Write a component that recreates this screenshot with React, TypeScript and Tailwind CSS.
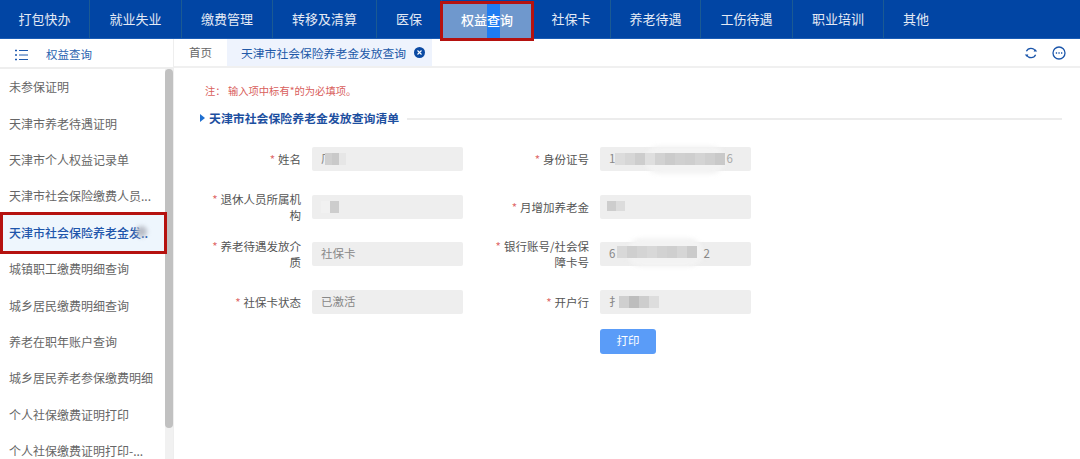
import React from "react";

const nav = [
  { t: "打包快办", w: "w-[90px]" },
  { t: "就业失业", w: "w-[92px]" },
  { t: "缴费管理", w: "w-[91px]" },
  { t: "转移及清算", w: "w-[104px]" },
  { t: "医保", w: "w-[65px]" },
];
const navRight = [
  { t: "社保卡", w: "w-[79px]" },
  { t: "养老待遇", w: "w-[90px]" },
  { t: "工伤待遇", w: "w-[92px]" },
  { t: "职业培训", w: "w-[91px]" },
  { t: "其他", w: "w-[64px]" },
];
const side = [
  "未参保证明",
  "天津市养老待遇证明",
  "天津市个人权益记录单",
  "天津市社会保险缴费人员...",
  "SEL",
  "城镇职工缴费明细查询",
  "城乡居民缴费明细查询",
  "养老在职年账户查询",
  "城乡居民养老参保缴费明细",
  "个人社保缴费证明打印",
  "个人社保缴费证明打印-...",
];

function Mosaic({ shades, cell = 10, h = 20, halo }: { shades: string[]; cell?: number; h?: number; halo?: string }) {
  return (
    <span className="relative inline-flex items-center">
      {halo ? <span className={"absolute rounded-full bg-[#f3f3f3] blur-[2px] " + halo} /> : null}
      <span className="relative flex blur-[0.5px]">
        {shades.map((c, i) => (
          <span key={i} style={{ width: cell, height: h, background: c }} />
        ))}
      </span>
    </span>
  );
}

function Field({ label, children }: { label: React.ReactNode; children: React.ReactNode }) {
  return (
    <div className="flex h-[24px] items-center">
      <div className="w-[101px] shrink-0 whitespace-nowrap text-right text-[11.5px] leading-[16px] text-[#555]">{label}</div>
      <div className="ml-[11px] flex h-[24px] w-[151px] items-center overflow-visible rounded-[2px] bg-[#eeeeee] pl-[9px] text-[11.5px] text-[#888]">
        {children}
      </div>
    </div>
  );
}

const Star = () => <span className="mr-[3px] text-[#e06a6a]">*</span>;

export default function App() {
  return (
    <div className="relative flex h-[459px] w-[1080px] flex-col overflow-hidden bg-white" style={{ fontFamily: '"Noto Sans CJK SC","Liberation Sans",sans-serif' }}>
      <header className="flex h-[39px] shrink-0 border-b border-b-[#1a5cb5] bg-[#0145a4] text-[13px] text-[#e4eaf5]">
        {nav.map((n) => (
          <div key={n.t} className={"flex items-center justify-center border-r border-r-[#1b5a93] " + n.w}>{n.t}</div>
        ))}
        <div className="relative z-20 -ml-[2px] -mr-[2px] mt-[1px] box-border flex h-[40px] w-[94px] border-[3px] border-[#b5120f] bg-[#6f98cd] font-medium text-white">
          <div className="flex w-full justify-center">
            <div className="w-[44px]" />
            <div className="w-[13px] bg-[#1e7cf2]" />
            <div className="w-[31px]" />
          </div>
          <div className="absolute inset-0 flex items-center justify-center pb-[2px] text-[13px]">权益查询</div>
        </div>
        {navRight.map((n, i) => (
          <div key={n.t} className={"flex items-center justify-center " + n.w + (i < 4 ? " border-r border-r-[#1b5a93]" : "")}>{n.t}</div>
        ))}
      </header>
      <div className="flex min-h-0 flex-1">
        <aside className="flex h-full w-[174px] shrink-0 flex-col border-r border-r-[#eeeeee]">
          <div className="flex h-[30px] shrink-0 items-center border-b-2 border-b-[#eeeeee] pl-[15px] pt-[4px] text-[11.5px] text-[#2a63b0]">
            <svg width="13" height="12" viewBox="0 0 13 12" fill="none" stroke="#1f5aae" strokeWidth="1">
              <path d="M4 1.5h9M4 6h9M4 10.5h9" />
              <path d="M0 1.5h2M0 6h2M0 10.5h2" strokeWidth="1.6" />
            </svg>
            <span className="ml-[18px]">权益查询</span>
          </div>
          <div className="flex min-h-0 flex-1">
            <ul className="w-[165px] shrink-0 text-[12px] text-[#666]">
              {side.map((s) =>
                s === "SEL" ? (
                  <li key={s} className="relative z-10 -my-[3px] box-border flex h-[42.4px] w-[167px] items-center border-[3px] border-[#b5120f] bg-[#eef6fd] pl-[6px] font-medium text-[#1d55ab]">
                    天津市社会保险养老金发..
                    <span className="absolute left-[133px] top-[11px] h-[11px] w-[11px] rounded-full bg-[#b9bdc6] blur-[2px]" />
                  </li>
                ) : (
                  <li key={s} className="flex h-[36.4px] items-center whitespace-nowrap pl-[9px]">{s}</li>
                )
              )}
            </ul>
            <div className="h-full w-[8px] bg-[#f1f1f1]">
              <div className="h-[359px] w-full rounded-[4px] bg-[#c1c1c1]" />
            </div>
          </div>
        </aside>
        <main className="flex min-w-0 flex-1 flex-col">
          <div className="flex h-[29px] shrink-0 items-stretch border-b-2 border-b-[#f0f0f0] text-[11.5px]">
            <div className="flex w-[53px] items-center justify-center text-[#666]">首页</div>
            <div className="flex w-[205px] items-center bg-[#eef3fd] pl-[14px] text-[11.8px] text-[#2159a8]">
              天津市社会保险养老金发放查询
              <span className="ml-[8px] flex h-[11px] w-[11px] items-center justify-center rounded-full bg-[#0b4aa3]">
                <svg width="5" height="5" viewBox="0 0 5 5" stroke="#fff" strokeWidth="1.1"><path d="M.5.5l4 4M4.5.5l-4 4" /></svg>
              </span>
            </div>
            <div className="ml-auto mr-[14px] flex items-center gap-[14px]">
              <svg width="14" height="14" viewBox="0 0 14 14" fill="none" stroke="#1a55aa" strokeWidth="1.3">
                <path d="M2.4 5.2A5 5 0 0 1 11.4 5" />
                <path d="M11.6 8.8A5 5 0 0 1 2.6 9" />
                <path d="M9.6 5.6h3.6L11.4 3.2z" fill="#1a55aa" stroke="none" />
                <path d="M.8 8.4h3.6L2.6 10.8z" fill="#1a55aa" stroke="none" />
              </svg>
              <svg width="14" height="14" viewBox="0 0 14 14" fill="none" stroke="#1a55aa" strokeWidth="1.3">
                <circle cx="7" cy="7" r="6" />
                <path d="M3.8 7h1.3M6.4 7h1.3M9 7h1.3" strokeWidth="1.5" />
              </svg>
            </div>
          </div>
          <div className="flex-1 pl-[26px] pr-[18px]">
            <p className="mt-[16px] h-[14px] pl-[5px] text-[10.3px] leading-[14px] text-[#d9605c]">注： 输入项中标有*的为必填项。</p>
            <div className="mt-[12px] flex h-[16px] items-center">
              <span className="h-0 w-0 border-y-[4px] border-l-[5px] border-y-transparent border-l-[#1f6fd0]" />
              <span className="ml-[4px] text-[11.9px] font-bold text-[#1d4f9f]">天津市社会保险养老金发放查询清单</span>
              <span className="ml-[8px] mt-[2px] h-[2px] flex-1 bg-[#ececec]" />
            </div>
            <div className="mt-[21px] grid w-[576px] grid-cols-[288px_288px] gap-y-[23.5px]">
              <Field label={<><Star />姓名</>}>
                <span className="-mr-[8px]">厂</span>
                <Mosaic shades={["#cfcfcf", "#c9c9c9", "#e6e6e6"]} cell={7} h={12} />
              </Field>
              <Field label={<><Star />身份证号</>}>
                <span>1</span>
                <Mosaic shades={["#dcdcdc", "#d6d6d6", "#cdcdcd", "#dfdfdf", "#d2d2d2", "#cbcbcb", "#d0d0d0", "#cecece", "#d4d4d4", "#cfcfcf", "#c9c9c9"]} cell={10} h={12} halo="-top-[7px] -bottom-[9px] left-[30px] right-0" />
                <span className="relative ml-[1px] text-[#aaa]">6</span>
              </Field>
              <Field label={<><Star />退休人员所属机<br />构</>}>
                <Mosaic shades={["#f1f1f1", "#cdcdcd"]} cell={9} h={12} />
              </Field>
              <Field label={<><Star />月增加养老金</>}>
                <span className="ml-[-2px] block">
                  <Mosaic shades={["#cdcdcd", "#dcdcdc"]} cell={9} h={10} />
                </span>
              </Field>
              <Field label={<><Star />养老待遇发放介<br />质</>}>社保卡</Field>
              <Field label={<><Star />银行账号/社会保<br />障卡号</>}>
                <span>6</span>
                <span className="ml-[2px] block">
                  <Mosaic shades={["#d8d8d8", "#cfcfcf", "#d4d4d4", "#d8d8d8", "#d2d2d2", "#cfcfcf", "#d6d6d6", "#cbcbcb"]} cell={10} h={12} halo="-top-[8px] -bottom-[9px] left-[10px] right-[-6px]" />
                </span>
                <span className="relative ml-[6px]">2</span>
              </Field>
              <Field label={<><Star />社保卡状态</>}>已激活</Field>
              <Field label={<><Star />开户行</>}>
                <span className="-mr-[2px]">扌</span>
                <Mosaic shades={["#cfcfcf", "#bdbdbd", "#cdcdcd", "#dddddd"]} cell={10} h={12} />
              </Field>
            </div>
            <div className="ml-[400px] mt-[15px] flex h-[25px] w-[56px] items-center justify-center rounded-[3px] bg-[#5a9cf8] text-[11.5px] text-white">打印</div>
          </div>
        </main>
      </div>
    </div>
  );
}
